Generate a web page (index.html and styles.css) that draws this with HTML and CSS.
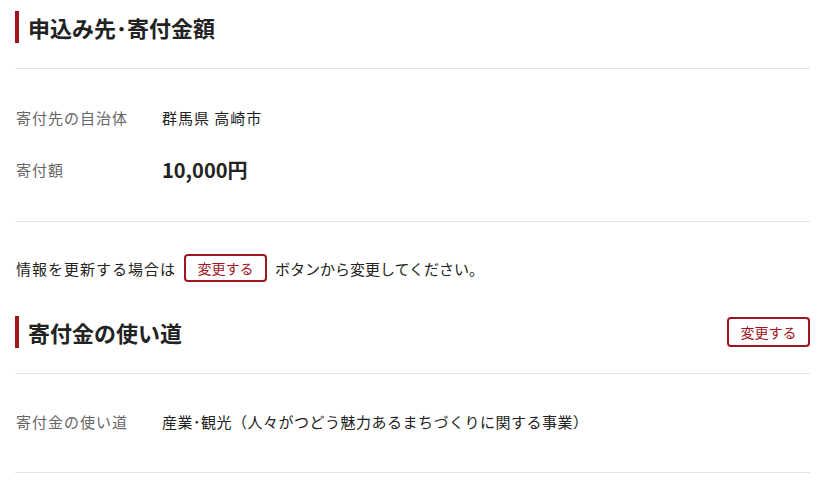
FILE: index.html
```html
<!DOCTYPE html>
<html lang="ja">
<head>
<meta charset="utf-8">
<title>申込み先・寄付金額</title>
<link rel="stylesheet" href="styles.css">
</head>
<body>
<main class="page">
  <section class="block">
    <div class="head">
      <h2 class="title">申込み先･寄付金額</h2>
    </div>
    <dl class="info info--two">
      <div class="row">
        <dt class="label">寄付先の自治体</dt>
        <dd class="value">群馬県 高崎市</dd>
      </div>
      <div class="row">
        <dt class="label">寄付額</dt>
        <dd class="value value--amount">10,000円</dd>
      </div>
    </dl>
  </section>

  <p class="note"><span>情報を更新する場合は</span><button class="btn btn--inline" type="button">変更する</button><span class="note-tail">ボタンから変更してください。</span></p>

  <section class="block">
    <div class="head head--with-btn">
      <h2 class="title">寄付金の使い道</h2>
      <button class="btn" type="button">変更する</button>
    </div>
    <dl class="info">
      <div class="row">
        <dt class="label">寄付金の使い道</dt>
        <dd class="value value--long">産業･観光（人々がつどう魅力あるまちづくりに関する事業）</dd>
      </div>
    </dl>
  </section>
</main>
</body>
</html>
```

FILE: styles.css
```css
* { box-sizing: border-box; }
html, body { margin: 0; padding: 0; background: #fff; }
body {
  font-family: "Noto Sans CJK JP", "Noto Sans", sans-serif;
  color: #222;
  font-size: 15px;
}
.page {
  padding: 11px 28px 0 15px;
}
.block { margin: 0; }
.head {
  display: flex;
  align-items: center;
  justify-content: space-between;
  padding-bottom: 25px;
  border-bottom: 1px solid #e3e3e3;
}
.title {
  margin: 0;
  border-left: 4px solid #a0141c;
  padding-left: 9px;
  height: 32px;
  line-height: 32px;
  font-size: 22px;
  font-weight: 700;
  color: #222;
}
.info {
  margin: 0;
  padding: 35px 0 39px;
  border-bottom: 1px solid #e3e3e3;
  display: flex;
  flex-direction: column;
  gap: 28px;
}
.info--two { padding: 36px 0 40px; }
.row {
  display: flex;
  align-items: center;
  height: 24px;
}
.label {
  width: 147px;
  padding-left: 1px;
  color: #666;
  font-size: 15px;
  letter-spacing: 1px;
}
.value {
  margin: 0;
  font-size: 15px;
  letter-spacing: 1px;
  color: #222;
}
.value--long { letter-spacing: 0.5px; }
.value--amount {
  font-size: 20px;
  font-weight: 700;
  letter-spacing: 0;
}
.note {
  margin: 32px 0 34px;
  padding-left: 1px;
  height: 28px;
  font-size: 15px;
  letter-spacing: 1px;
  color: #222;
  display: flex;
  align-items: center;
  gap: 8px;
}
.note-tail { letter-spacing: 0; }
.btn {
  font-family: inherit;
  width: 83px;
  height: 30px;
  border: 2px solid #a0141c;
  border-radius: 4px;
  background: #fff;
  color: #a0141c;
  font-size: 14px;
  letter-spacing: 0;
  padding: 0;
  cursor: pointer;
}
.btn--inline { height: 28px; }
```
